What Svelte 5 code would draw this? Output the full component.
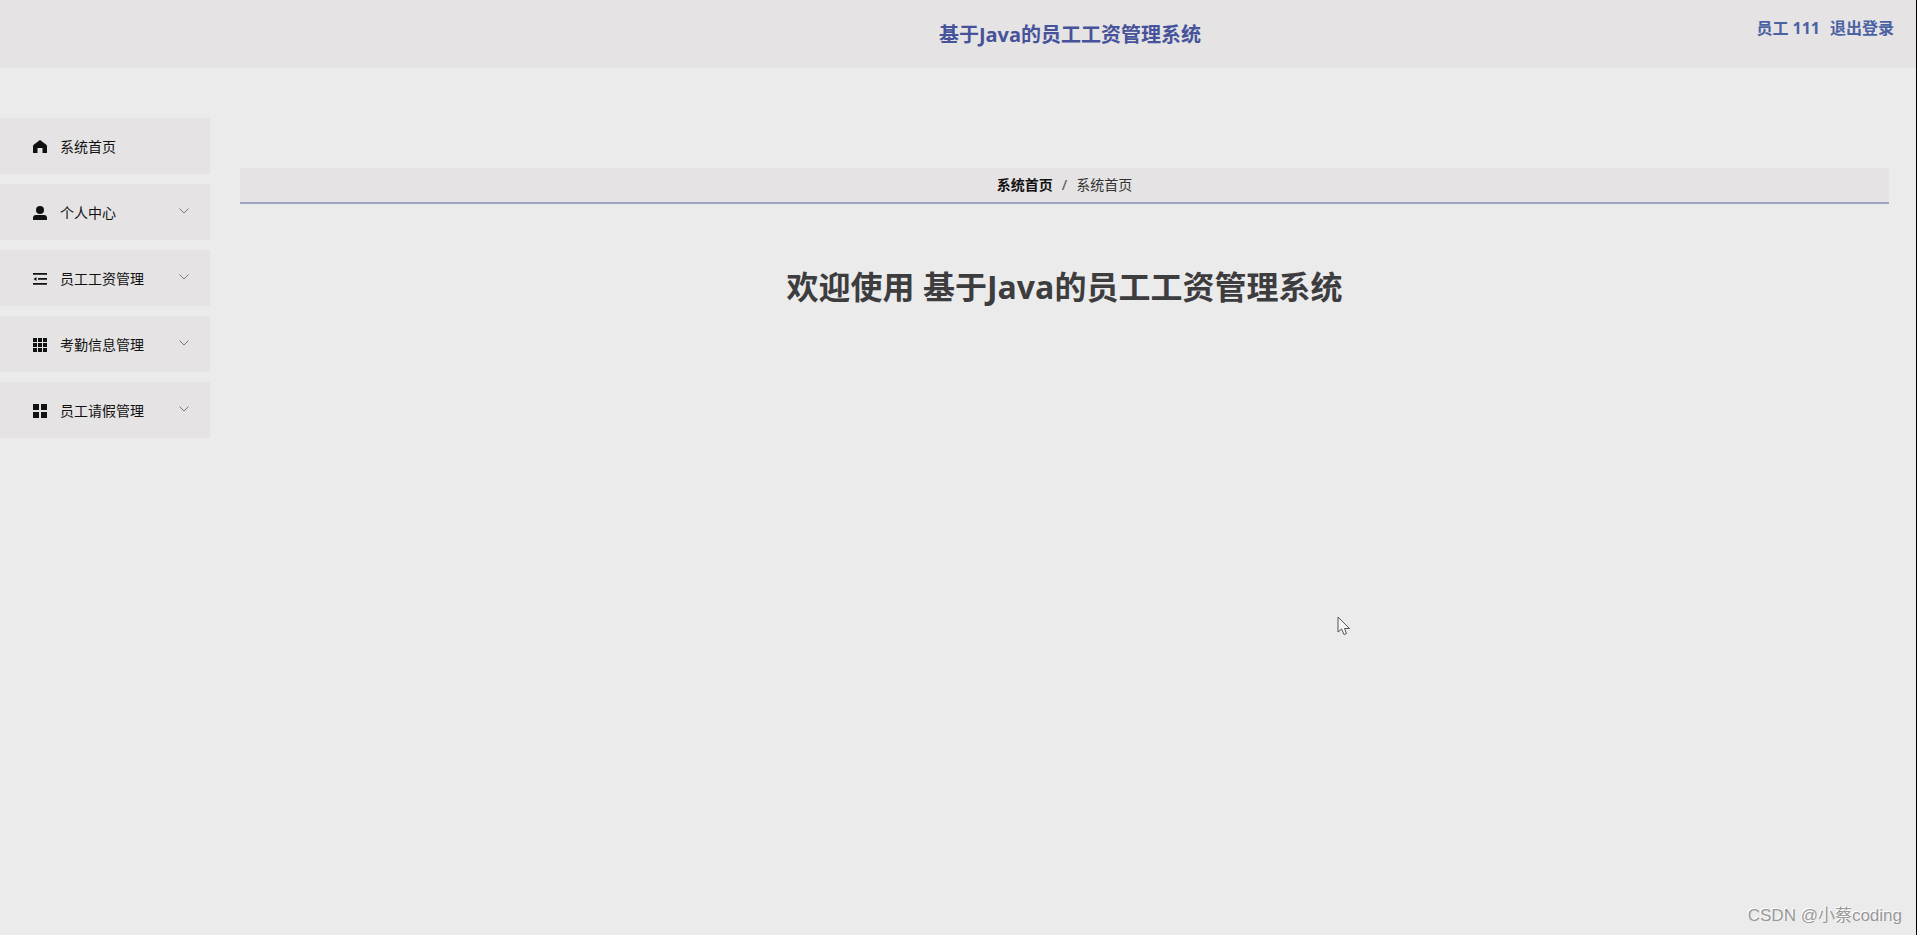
<script>
    let userName = '111'
    let title = '基于Java的员工工资管理系统'

    // icon: svg path on a 14x14 grid
    let menus = [
        { name: '系统首页', icon: 'M7 0 L13 4.5 Q14 5.2 14 6.5 V13 H9.5 V8 H4.5 V13 H0 V6.5 Q0 5.2 1 4.5 Z', children: false },
        { name: '个人中心', icon: 'M7 0 A4 4 0 0 1 7 8 A4 4 0 0 1 7 0 Z M0 14 V12 Q0 9 3 9 H11 Q14 9 14 12 V14 Z', children: true },
        { name: '员工工资管理', icon: 'M0 1 H14 V2.8 H0 Z M5 6 H14 V7.8 H5 Z M0 11 H14 V12.8 H0 Z M0.5 6.9 L3.5 4.9 V8.9 Z', children: true },
        { name: '考勤信息管理', icon: 'M0 0 H4 V4 H0 Z M5 0 H9 V4 H5 Z M10 0 H14 V4 H10 Z M0 5 H4 V9 H0 Z M5 5 H9 V9 H5 Z M10 5 H14 V9 H10 Z M0 10 H4 V14 H0 Z M5 10 H9 V14 H5 Z M10 10 H14 V14 H10 Z', children: true },
        { name: '员工请假管理', icon: 'M0 0 H6 V6 H0 Z M8 0 H14 V6 H8 Z M0 8 H6 V14 H0 Z M8 8 H14 V14 H8 Z', children: true }
    ]
</script>

<div class="page">
    <header>
        <div class="title">{title}</div>
        <div class="user">
            <span>员工 {userName}</span>
            <button class="logout">退出登录</button>
        </div>
    </header>

    <div class="container">
        <nav>
            {#each menus as menu}
                <button class="menu-item">
                    <svg class="icon" viewBox="0 0 14 14"><path d={menu.icon} /></svg>
                    <span>{menu.name}</span>
                    {#if menu.children}
                        <svg class="arrow" viewBox="0 0 10 6"><path d="M0.5 0.5 L5 5 L9.5 0.5" /></svg>
                    {/if}
                </button>
            {/each}
        </nav>

        <main>
            <div class="breadcrumb">
                <a href="#/">系统首页</a>
                <span class="separator">/</span>
                <span>系统首页</span>
            </div>
            <h1>欢迎使用 {title}</h1>
        </main>
    </div>

    <svg class="cursor" viewBox="0 0 14 20">
        <path d="M1 1 V16 L4.5 13 L7 18.5 L9.5 17.5 L7.5 12.5 H12.5 Z" />
    </svg>
    <div class="watermark">CSDN @小蔡coding</div>
</div>

<style>
    :global(body) {
        margin: 0;
    }

    .page {
        position: relative;
        box-sizing: border-box;
        min-height: 100vh;
        background: #ebebeb;
        border-right: 1px solid #000;
        font-family: "Open Sans", "Noto Sans CJK SC", sans-serif;
        font-size: 14px;
        line-height: 20px;
        color: #111;
    }

    button {
        padding: 0;
        border: none;
        background: none;
        font: inherit;
        color: inherit;
        cursor: pointer;
    }

    header {
        display: grid;
        grid-template-columns: 1fr auto 1fr;
        align-items: center;
        box-sizing: border-box;
        height: 68px;
        padding: 2px 22px 0 246px;
        background: #e5e3e4;
        color: #46539a;
    }

    .title {
        grid-column: 2;
        font-size: 20px;
        font-weight: 700;
    }

    .user {
        display: flex;
        justify-content: flex-end;
        gap: 10px;
        padding-bottom: 14px;
        font-size: 16px;
        font-weight: 700;
        color: #4a62a3;
    }

    .container {
        display: flex;
        padding-top: 50px;
    }

    nav {
        display: flex;
        flex-direction: column;
        gap: 10px;
        width: 210px;
        flex-shrink: 0;
    }

    .menu-item {
        display: flex;
        align-items: center;
        box-sizing: border-box;
        height: 56px;
        padding: 2px 21px 0 33px;
        background: #e5e3e4;
    }

    .icon {
        width: 14px;
        height: 14px;
        margin-right: 13px;
        fill: #111;
    }

    .arrow {
        width: 10px;
        height: 6px;
        margin-left: auto;
        margin-bottom: 4px;
        fill: none;
        stroke: #777;
    }

    main {
        flex: 1;
        padding: 50px 27px 0 30px;
    }

    .breadcrumb {
        display: flex;
        align-items: center;
        justify-content: center;
        height: 34px;
        background: #e5e3e4;
        border-bottom: 2px solid #9ea4c3;
        color: #333;
    }

    .breadcrumb a {
        font-weight: 700;
        color: #111;
        text-decoration: none;
    }

    .separator {
        margin: 0 9px;
        font-weight: 600;
        color: #666;
    }

    h1 {
        margin: 61px 0 0;
        font-size: 32px;
        line-height: 44px;
        text-align: center;
        color: #3d3d3f;
    }

    .cursor {
        position: absolute;
        left: 1337px;
        top: 616px;
        width: 14px;
        height: 20px;
        fill: #f4f4f4;
        stroke: #55525c;
    }

    .watermark {
        position: absolute;
        right: 14px;
        bottom: 7px;
        font-family: "Liberation Sans", "Noto Sans CJK SC", sans-serif;
        font-size: 17px;
        line-height: 24px;
        color: #999;
        text-shadow: -1px -1px 0 #fff;
    }
</style>
